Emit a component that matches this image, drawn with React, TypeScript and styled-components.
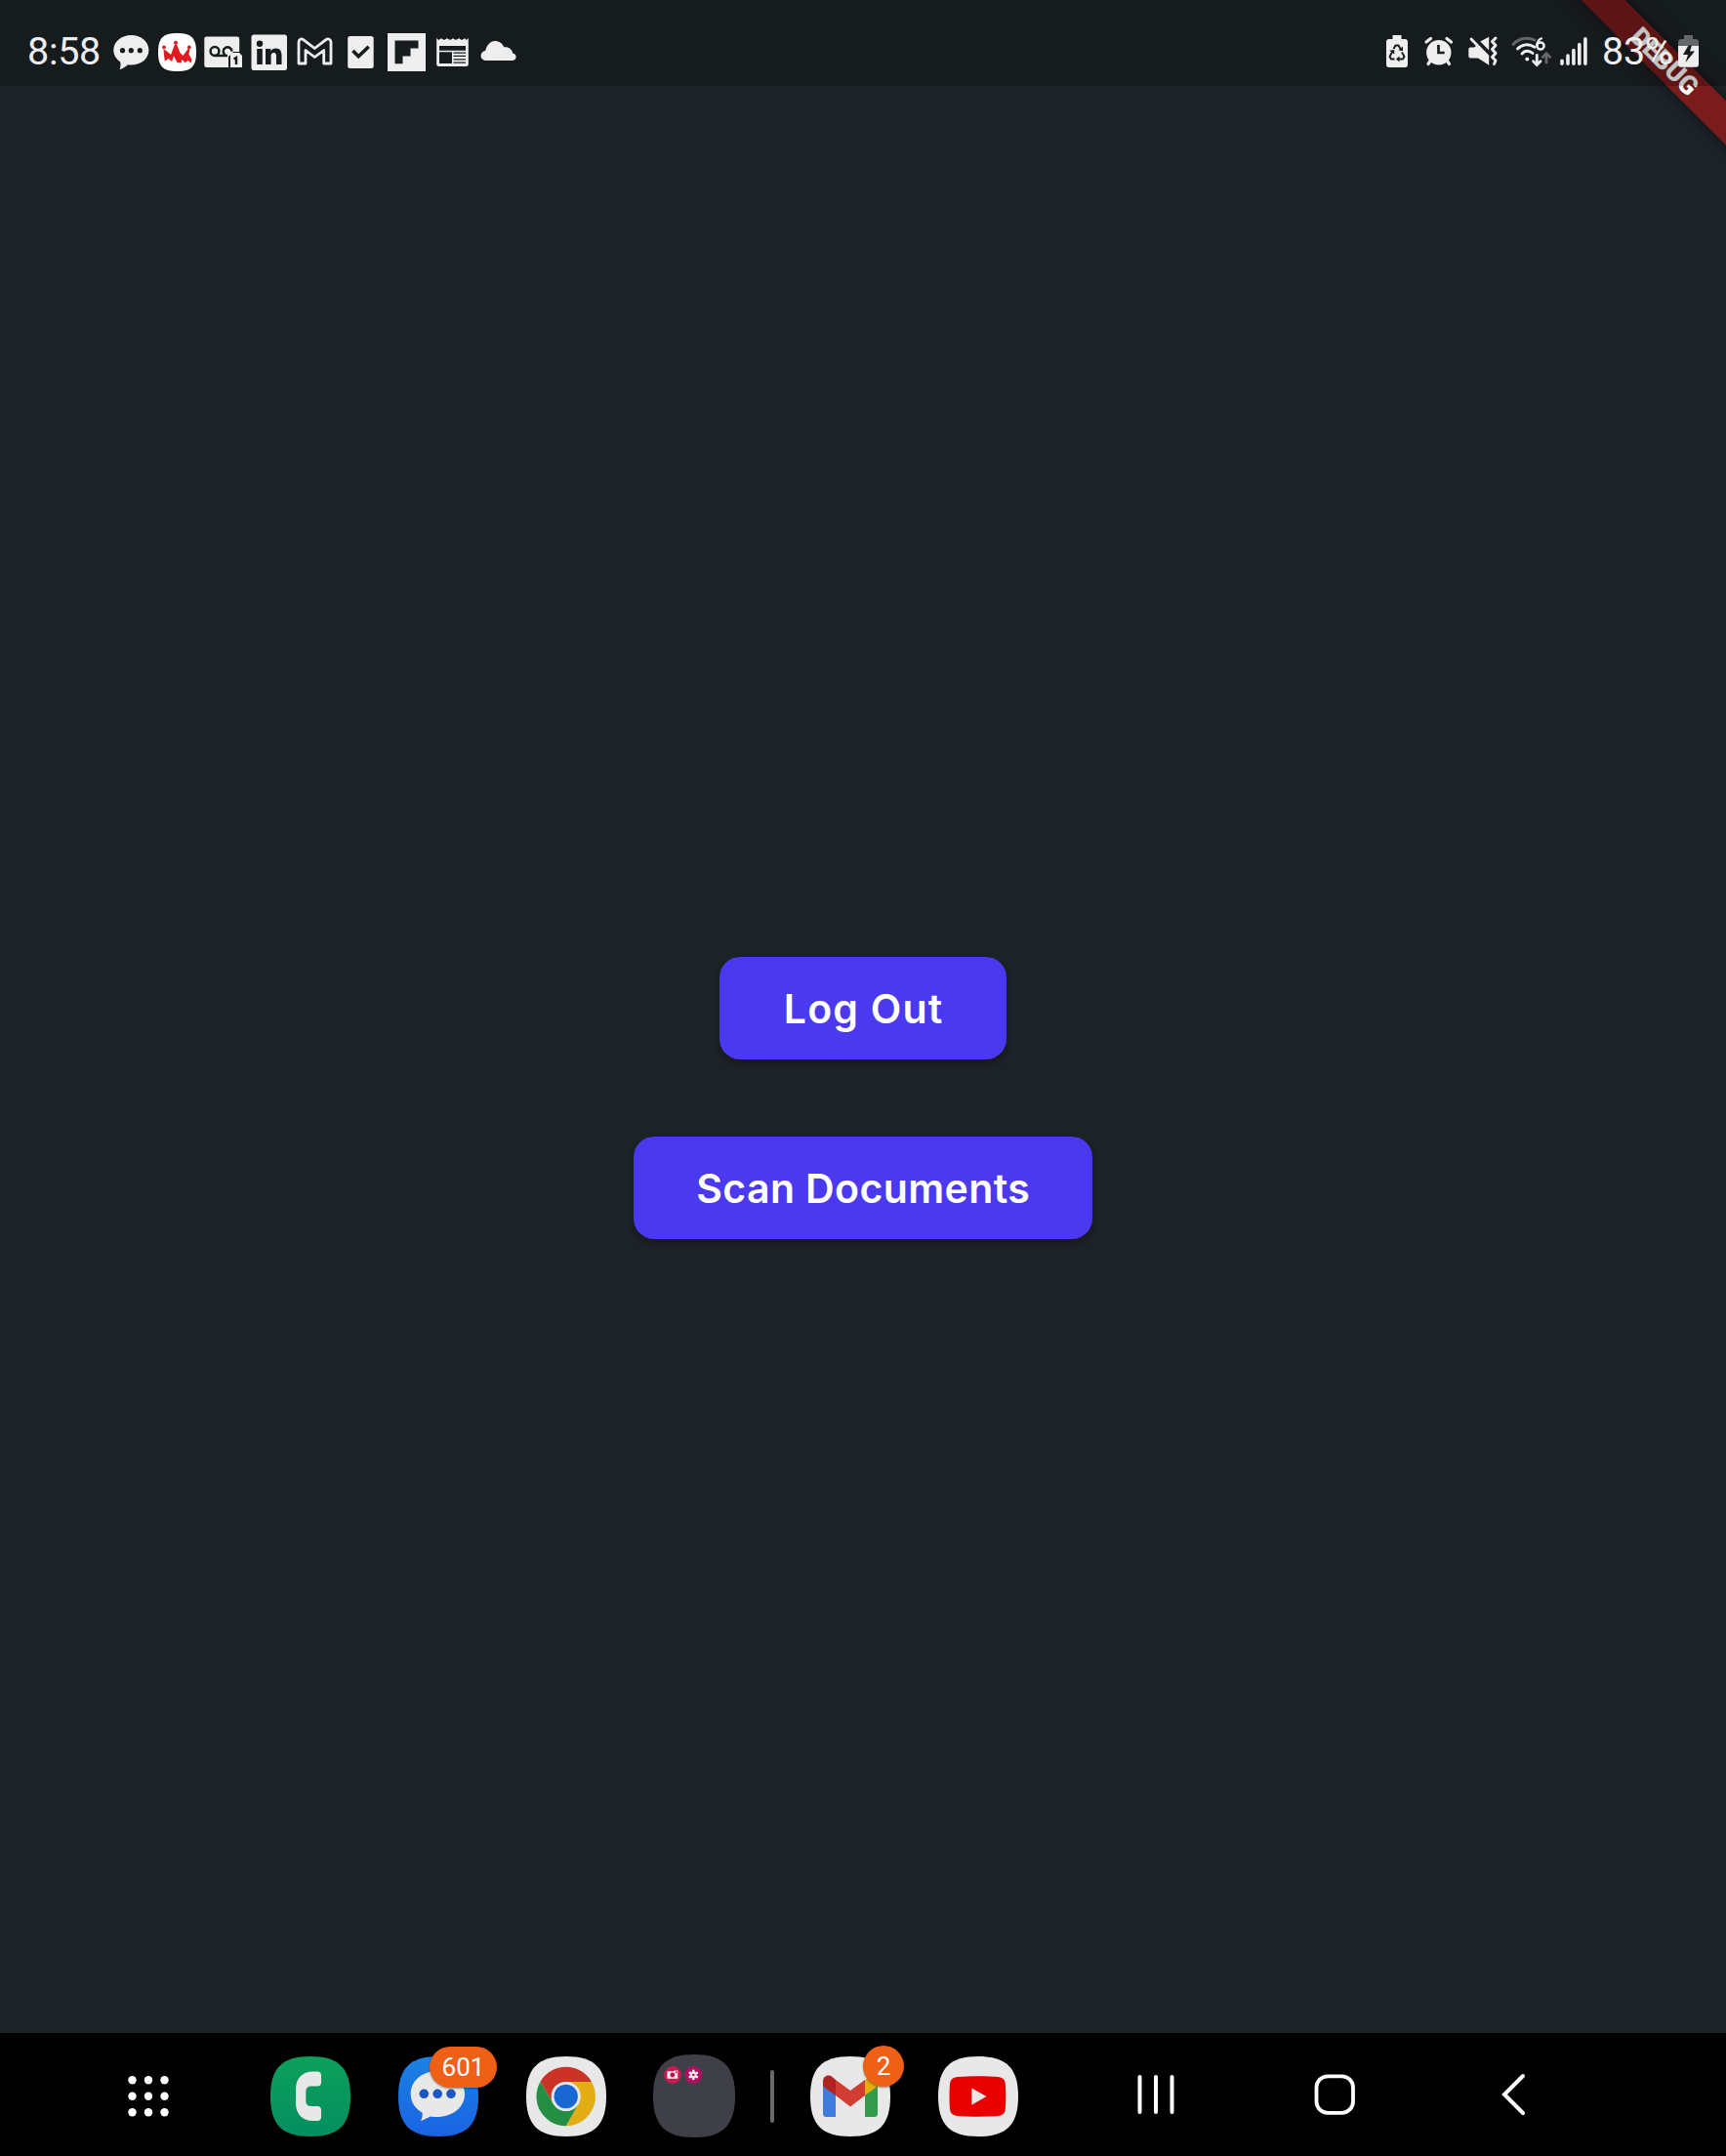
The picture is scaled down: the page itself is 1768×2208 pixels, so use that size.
import React from "react";
import styled, { createGlobalStyle } from "styled-components";

const GlobalStyle = createGlobalStyle`
  body { margin: 0; background: #1d2428; }
  *, *::before, *::after { box-sizing: border-box; }
`;

const Screen = styled.div`
  position: relative;
  display: flex;
  flex-direction: column;
  width: 1768px;
  height: 2208px;
  overflow: hidden;
  background: #1d2428;
  font-family: Roboto, "Liberation Sans", sans-serif;
`;

const StatusBar = styled.header`
  position: relative;
  z-index: 1;
  display: flex;
  justify-content: space-between;
  height: 88px;
  padding: 34px 26px 0 28px;
  background: rgba(0, 0, 0, 0.24);
  color: #eeeeee;
`;

const StatusText = styled.span<{ $width: number; $before?: number }>`
  width: ${(p) => p.$width}px;
  margin-left: ${(p) => p.$before ?? 0}px;
  font-size: 39.5px;
  line-height: 38px;
  white-space: nowrap;
  letter-spacing: -0.3px;
`;

const Notifications = styled.div`
  display: flex;
  gap: 7px;
`;

const Indicators = styled.div`
  display: flex;
`;

const Icon = styled.svg<{ $before?: number }>`
  display: block;
  flex: none;
  margin-left: ${(p) => p.$before ?? 0}px;
`;

const Ribbon = styled.div`
  position: absolute;
  left: 1495px;
  top: 47px;
  width: 420px;
  height: 32px;
  transform: rotate(45deg);
  background: #7a1b1c;
  box-shadow: 0 0 16px rgba(0, 0, 0, 0.5);
  color: #fff;
  font-size: 26.8px;
  font-weight: 900;
  line-height: 32px;
  letter-spacing: -0.1px;
  text-align: center;
`;

const Content = styled.main`
  flex: 1;
  display: flex;
  flex-direction: column;
  align-items: center;
  justify-content: center;
  gap: 79px;
  padding-top: 79px;
`;

const ActionButton = styled.button<{ $width: number; $spacing: number }>`
  width: ${(p) => p.$width}px;
  height: 105px;
  padding: 0 0 0 ${(p) => p.$spacing}px;
  border: 0;
  border-radius: 21px;
  background: #4b39ef;
  color: #fff;
  font-family: Inter, "Liberation Sans", sans-serif;
  font-size: 41px;
  font-weight: 600;
  letter-spacing: ${(p) => p.$spacing}px;
  white-space: nowrap;
  box-shadow: 0 5px 8px rgba(24, 14, 24, 0.42), 0 2px 5px rgba(24, 14, 24, 0.3);
`;

const Dock = styled.footer`
  display: flex;
  align-items: center;
  height: 126px;
  padding: 3px 0 0 111px;
  background: #000;
`;

const AppRow = styled.div<{ $before: number }>`
  display: flex;
  align-items: center;
  gap: 49px;
  margin-left: ${(p) => p.$before}px;
`;

const AppTile = styled.div`
  position: relative;
  width: 82px;
  height: 82px;
`;

const FolderTile = styled(AppTile)`
  display: flex;
  align-items: center;
  justify-content: center;
`;

const Badge = styled.span<{ $left: number; $top: number; $width: number }>`
  position: absolute;
  left: ${(p) => p.$left}px;
  top: ${(p) => p.$top}px;
  width: ${(p) => p.$width}px;
  height: 42px;
  border-radius: 21px;
  background: #ef6017;
  box-shadow: 0 1px 2px rgba(0, 0, 0, 0.4);
  color: #fff;
  font-size: 26px;
  line-height: 42px;
  text-align: center;
`;

const Divider = styled.div`
  width: 4px;
  height: 54px;
  margin-left: 37px;
  border-radius: 2px;
  background: #6a6a6a;
`;

const NavRow = styled.nav`
  display: flex;
  gap: 123px;
  margin: -3px 0 0 111px;
`;

const SQUIRCLE =
  "M41 0C70 0 82 12 82 41C82 70 70 82 41 82C12 82 0 70 0 41C0 12 12 0 41 0Z";
const INK = "#171c1e";
const PAPER = "#eeeeee";

const ChatIcon = () => (
  <Icon width="40" height="40" viewBox="0 0 40 40">
    <path
      fill={PAPER}
      d="M20.500 2C10.300 2 2.300 8.700 2.300 17.300C2.300 22.400 5 26.500 9.300 29.400C9.700 32 9.500 34.500 8.600 37.200C12.300 36.200 14.800 34.300 17 32.300C29 33.900 38.400 27 38.400 17.300C38.400 8.700 30.700 2 20.500 2Z"
    />
    <g fill={INK}>
      <circle cx="11.500" cy="17.700" r="2.600" />
      <circle cx="20.300" cy="17.700" r="2.600" />
      <circle cx="29.300" cy="17.700" r="2.600" />
    </g>
  </Icon>
);

const CrownIcon = () => (
  <Icon width="40" height="40" viewBox="0 0 40 40">
    <path
      fill="#fff"
      d="M20.500 0C35 0 40 5 40 19.500C40 34 35 39 20.500 39C6 39 1 34 1 19.500C1 5 6 0 20.500 0Z"
    />
    <g fill="#e11b22">
      <circle cx="7" cy="14.300" r="1.900" />
      <circle cx="19" cy="9.800" r="2" />
      <circle cx="32.800" cy="14.300" r="1.900" />
      <path d="M6.500 16L12.500 20.500L14 22L18 11.500H20L23.500 20L26.500 23L32 15.500L33.500 16L32.500 21.500L35.500 27L34.500 30.500L31.500 28L28.500 30.200L25.500 27L24.500 30.500L20.500 30L17 23.500L15 29L11.500 26L8 28.800L7 23Z" />
    </g>
  </Icon>
);

const VoicemailIcon = () => (
  <Icon width="40" height="40" viewBox="0 0 40 40">
    <path
      fill={PAPER}
      d="M3.500 3.500H35A2.200 2.200 0 0 1 37.200 5.700V19H31L26 24V35H3.500A2.200 2.200 0 0 1 1.300 32.800V5.700A2.200 2.200 0 0 1 3.500 3.500Z"
    />
    <g fill="none" stroke={INK} strokeWidth="2.500">
      <circle cx="12" cy="18.500" r="4.400" />
      <path d="M22.600 22.300A4.400 4.400 0 1 1 29.500 18.500" />
      <path d="M12 23H25" />
    </g>
    <path fill={PAPER} d="M30.500 20H37L40 23V35H28V22.500A2.500 2.500 0 0 1 30.500 20Z" />
    <path d="M31.500 26.500L34 25V32" fill="none" stroke={INK} strokeWidth="2.400" />
  </Icon>
);

const LinkedInIcon = () => (
  <Icon width="40" height="40" viewBox="0 0 40 40">
    <rect x="2.500" y="1.500" width="36.500" height="36.500" rx="2.500" fill={PAPER} />
    <g fill={INK}>
      <circle cx="11" cy="10.700" r="3.200" />
      <path d="M8.200 16H13.800V32H8.200Z" />
      <path d="M17 16H22.300V18.300C23.400 16.500 25.300 15.500 27.500 15.500C32 15.500 33.500 18.500 33.500 23V32H28V24C28 21.500 27.400 20 25.500 20C23.300 20 22.600 21.500 22.600 24V32H17Z" />
    </g>
  </Icon>
);

const MailIcon = () => (
  <Icon width="40" height="40" viewBox="0 0 40 40">
    <path
      d="M4 31V9.300C4 6.200 6.500 5 9 6.800L20.300 15.500L31.600 6.800C34.200 5 37 6.200 37 9.300V31H29.700V17.500L20.300 24.500L11 17.500V31Z"
      fill="none"
      stroke={PAPER}
      strokeWidth="2.800"
      strokeLinejoin="round"
    />
  </Icon>
);

const CheckIcon = () => (
  <Icon width="40" height="40" viewBox="0 0 40 40">
    <rect x="7.200" y="3" width="26.500" height="33" rx="2.500" fill={PAPER} />
    <path d="M12.500 18L18.200 23.700L28.700 13.800" fill="none" stroke={INK} strokeWidth="3.600" />
  </Icon>
);

const FlipboardIcon = () => (
  <Icon width="40" height="40" viewBox="0 0 40 40">
    <rect x="1" width="39" height="39" fill={PAPER} />
    <path d="M8.500 7.500H32.500V15.500H24.500V23.500H16.500V31.300H8.500Z" fill={INK} />
  </Icon>
);

const NewsIcon = () => (
  <Icon width="40" height="40" viewBox="0 0 40 40">
    <path
      fill={PAPER}
      d="M4.200 5L6.200 7L9 5.200L12 7L15 5.200L18 7L21 5.200L24 7L27 5.200L30 7L33 5.200L34.800 7L36.800 5V31.500A2.500 2.500 0 0 1 34.300 34H6.700A2.500 2.500 0 0 1 4.200 31.500Z"
    />
    <path
      fill={INK}
      d="M7 13H34V17.700H7ZM7 19.300H20V31H7ZM21.500 19.500H34V20.700H21.500ZM21.500 22.800H34V24H21.500ZM21.500 26.200H34V27.400H21.500ZM21.500 29.600H34V30.800H21.500Z"
    />
  </Icon>
);

const CloudIcon = () => (
  <Icon width="40" height="40" viewBox="0 0 40 40">
    <path
      fill={PAPER}
      d="M8 28A5 5 0 0 1 7.200 18C8.500 12.500 12 8 17 8C21.800 8 24.700 10.700 26.400 14.200C31.500 13.800 34.500 16.500 35.200 20.500C40.200 21.500 39.500 28 34.500 28Z"
    />
  </Icon>
);

const RecycleBatteryIcon = () => (
  <Icon width="24" height="40" viewBox="0 0 24 40">
    <path
      fill={PAPER}
      d="M7.500 2H16.500V6H20A3 3 0 0 1 23 9V32A3 3 0 0 1 20 35H4A3 3 0 0 1 1 32V9A3 3 0 0 1 4 6H7.500Z"
    />
    <g fill="none" stroke={INK} strokeWidth="1.900" strokeLinejoin="round">
      <path d="M8.500 16L10.500 12.500H13.500L16 17" />
      <path d="M7.500 18.500L4.500 24L6 26.500H9.500" />
      <path d="M17 19.500L19.500 24L18 26.500H13" />
    </g>
    <path fill={INK} d="M13.500 17.500L18 18V13.500ZM4.200 17.800L9 17L9.500 21.500ZM14.500 23.500V29.500L11 26.500Z" />
  </Icon>
);

const AlarmIcon = () => (
  <Icon $before={14} width="32" height="40" viewBox="0 0 32 40">
    <g stroke={PAPER} strokeWidth="3.200" strokeLinecap="round">
      <path d="M4 9L8.500 5.500M29.500 9L25 5.500M9 27L6 31.500M24.500 27L27.500 31.500" />
    </g>
    <circle cx="16.800" cy="19.800" r="12.700" fill={PAPER} />
    <path d="M16.500 12V20H22.700" fill="none" stroke={INK} strokeWidth="2.700" />
  </Icon>
);

const MuteIcon = () => (
  <Icon $before={13} width="34" height="40" viewBox="0 0 34 40">
    <path
      fill={PAPER}
      d="M2.300 16.500A2 2 0 0 1 4.300 14.500H8L11.500 12L23.200 24.500V32.800L12 25.500H4.300A2 2 0 0 1 2.300 23.500ZM14.300 8.500L23.200 3.800V17.500Z"
    />
    <path d="M5 6L22 23.500" stroke={PAPER} strokeWidth="2.800" strokeLinecap="round" />
    <path
      d="M30 5L26.500 8.500L30 12.500L26.500 16.500L30 20.500L26.500 24.500L30 28L28.500 31.500"
      fill="none"
      stroke={PAPER}
      strokeWidth="3"
      strokeLinecap="round"
      strokeLinejoin="round"
    />
  </Icon>
);

const WifiIcon = () => (
  <Icon $before={11} width="42" height="40" viewBox="0 0 42 40">
    <g fill="none" strokeWidth="2.900" strokeLinecap="round">
      <path d="M3 11.500C9 4.800 18 3.700 25 7" stroke="#62666a" />
      <path d="M7.500 16C12 11 19 10.500 25 14.200M12 21C15 17.500 19.500 17.500 23 20.500" stroke={PAPER} />
    </g>
    <circle cx="17.300" cy="26.500" r="2" fill={PAPER} />
    <circle cx="31" cy="13" r="3.600" fill="none" stroke={PAPER} strokeWidth="2.500" />
    <path d="M27.300 13C27.300 8.500 29.300 6 32.800 5" fill="none" stroke={PAPER} strokeWidth="2.300" />
    <path
      d="M27.300 22.500V32M23.600 28.800L27.300 32.500L31 28.800"
      fill="none"
      stroke={PAPER}
      strokeWidth="2.800"
      strokeLinecap="round"
    />
    <path
      d="M37 30V21.500M33.300 24.500L37 20.800L40.700 24.500"
      fill="none"
      stroke="#62666a"
      strokeWidth="2.800"
      strokeLinecap="round"
    />
  </Icon>
);

const SignalIcon = () => (
  <Icon $before={8} width="30" height="40" viewBox="0 0 30 40">
    <g stroke={PAPER} strokeWidth="3.600" strokeLinecap="round">
      <path d="M3 28.300V31.300M9 23V31.300M14.900 17.500V31.300M20.800 11.500V31.300M26.900 5.800V31.300" />
    </g>
  </Icon>
);

const ChargingIcon = () => (
  <Icon $before={10} width="24" height="40" viewBox="0 0 24 40">
    <path fill="#65686b" d="M7 2H16V6H19.500A3 3 0 0 1 22 9V13H1V9A3 3 0 0 1 3.500 6H7Z" />
    <path fill={PAPER} d="M1 13H22V32A2.700 2.700 0 0 1 19.300 34.700H3.700A2.700 2.700 0 0 1 1 32Z" />
    <path fill={INK} d="M11.500 12.500H15L13 18.500H18L8.500 30L11 22H6Z" />
  </Icon>
);

const AppsIcon = () => (
  <Icon width="82" height="82" viewBox="0 0 82 82">
    {[24.2, 40.7, 57.2].map((y) =>
      [24.5, 41, 57.5].map((x) => (
        <circle key={`${x}-${y}`} cx={x} cy={y} r="4.200" fill="#fff" />
      ))
    )}
  </Icon>
);

const PhoneIcon = () => (
  <Icon width="82" height="82" viewBox="0 0 82 82">
    <defs>
      <linearGradient id="phone" x2="0" y2="1">
        <stop stopColor="#0ba05a" />
        <stop offset="1" stopColor="#058e60" />
      </linearGradient>
    </defs>
    <path d={SQUIRCLE} fill="url(#phone)" />
    <path
      fill="#e8e8e8"
      d="M44 15.500H48Q52 15.500 52 19.500V26.500Q52 30.500 48 30.500H42Q36.300 30.500 36.300 36V45.500Q36.300 51 42 51H48Q52 51 52 55V62Q52 66 48 66H44C32 66 26 58.500 26 48V33.500C26 23 32 15.500 44 15.500Z"
    />
  </Icon>
);

const MessagesIcon = () => (
  <Icon width="82" height="82" viewBox="0 0 82 82">
    <defs>
      <linearGradient id="messages" x2="0" y2="1">
        <stop stopColor="#1b82e2" />
        <stop offset="1" stopColor="#1a63e4" />
      </linearGradient>
    </defs>
    <path d={SQUIRCLE} fill="url(#messages)" />
    <path
      fill="#e8e8e8"
      d="M40.300 15C25 15 12.700 24.500 12.700 38.500C12.700 47 17.500 53.500 24.500 57.500C25 60.500 24.500 63 23 66.300L33 61.500C52 64.500 68 54 68 38.500C68 24.500 56 15 40.300 15Z"
    />
    <g fill="#1c56c4">
      <circle cx="26.300" cy="38.300" r="4.800" />
      <circle cx="40.200" cy="38.300" r="4.800" />
      <circle cx="54" cy="38.300" r="4.800" />
    </g>
  </Icon>
);

const ChromeIcon = () => (
  <Icon width="82" height="82" viewBox="0 0 82 82">
    <path d={SQUIRCLE} fill="#e8e8e8" />
    <g transform="translate(40.700 41)">
      <path fill="#cb3327" d="M-26.200 -15.100A30.200 30.200 0 0 1 26.200 -15.100H0L-13 7.500Z" />
      <path fill="#e3ae14" d="M26.200 -15.100A30.200 30.200 0 0 1 0 30.200L13 7.500L0 -15.100Z" />
      <path fill="#248e42" d="M0 30.200A30.200 30.200 0 0 1 -26.200 -15.100L-13 7.500H13Z" />
      <circle r="15.100" fill="#e8e8e8" />
      <circle r="12.200" fill="#1967d2" />
    </g>
  </Icon>
);

const FolderIcon = () => (
  <Icon width="84" height="85" viewBox="-1 -1 84 84" preserveAspectRatio="none">
    <path
      d="M41 -1C70 -1 83 11 83 41C83 71 70 83 41 83C12 83 -1 71 -1 41C-1 11 12 -1 41 -1Z"
      fill="#3f3f47"
    />
    <circle cx="19" cy="19.700" r="8.800" fill="#c91a51" />
    <path fill="#eee" d="M13.500 16H19.500L21 15.300H24.300V23.500H13.500Z" />
    <circle cx="18.800" cy="19.700" r="2.400" fill="#b3174b" />
    <circle cx="22.700" cy="17" r="0.900" fill="#b3174b" />
    <circle cx="40.300" cy="19.700" r="8.800" fill="#b30c64" />
    <g stroke="#eee" strokeWidth="2.700" strokeLinecap="round">
      <path d="M40.300 15.700V23.700M36.800 17.700L43.800 21.700M36.800 21.700L43.800 17.700" />
    </g>
    <circle cx="40.300" cy="19.700" r="1.300" fill="#b30c64" />
  </Icon>
);

const GmailAppIcon = () => (
  <Icon width="82" height="82" viewBox="0 0 82 82">
    <path d={SQUIRCLE} fill="#e8e8e8" />
    <path fill="#3f7bdc" d="M13 29L26 39V62H16.500A3.500 3.500 0 0 1 13 58.500Z" />
    <path fill="#319b4b" d="M69 29L56 39V62H65.500A3.500 3.500 0 0 0 69 58.500Z" />
    <path fill="#e3ae0c" d="M56 24.500L60.500 21C64.500 18 69 20.500 69 25V30.500L56 40Z" />
    <path fill="#d23d33" d="M26 24L41 35L56 24V40L41 51.500L26 40Z" />
    <path fill="#b02320" d="M13 25.500C13 20 18.500 17.800 22.500 21L26 24V40L13 30.500Z" />
  </Icon>
);

const YoutubeIcon = () => (
  <Icon width="82" height="82" viewBox="0 0 82 82">
    <path d={SQUIRCLE} fill="#e8e8e8" />
    <path
      fill="#e80000"
      d="M20 21C33 20 48 20 61 21C66 21.500 68.300 23.500 68.800 28C69.500 37 69.500 45 68.800 54C68.300 58.500 66 60.500 61 61C48 62 33 62 20 61C15 60.500 12.600 58.500 12 54C11.300 45 11.300 37 12 28C12.600 23.500 15 21.500 20 21Z"
    />
    <path fill="#e8e8e8" d="M34.300 32.500L49.500 41L34.300 49.700Z" />
  </Icon>
);

const RecentsIcon = () => (
  <Icon width="60" height="60" viewBox="0 0 60 60">
    <path d="M13.500 12V48M30 12V48M46.500 12V48" stroke="#fff" strokeWidth="4" strokeLinecap="round" />
  </Icon>
);

const HomeIcon = () => (
  <Icon width="60" height="60" viewBox="0 0 60 60">
    <rect
      x="11.500"
      y="11.300"
      width="37.500"
      height="37.500"
      rx="11.500"
      fill="none"
      stroke="#fff"
      strokeWidth="3.800"
    />
  </Icon>
);

const BackIcon = () => (
  <Icon width="60" height="60" viewBox="0 0 60 60">
    <path d="M40 11L21 30L40 49" fill="none" stroke="#fff" strokeWidth="4" strokeLinecap="round" />
  </Icon>
);

export default function App() {
  return (
    <Screen>
      <GlobalStyle />
      <Ribbon>DEBUG</Ribbon>
      <StatusBar>
        <Notifications>
          <StatusText $width={79}>8:58</StatusText>
          <ChatIcon />
          <CrownIcon />
          <VoicemailIcon />
          <LinkedInIcon />
          <MailIcon />
          <CheckIcon />
          <FlipboardIcon />
          <NewsIcon />
          <CloudIcon />
        </Notifications>
        <Indicators>
          <RecycleBatteryIcon />
          <AlarmIcon />
          <MuteIcon />
          <WifiIcon />
          <SignalIcon />
          <StatusText $width={67} $before={14}>83%</StatusText>
          <ChargingIcon />
        </Indicators>
      </StatusBar>
      <Content>
        <ActionButton $width={294} $spacing={1.2}>Log Out</ActionButton>
        <ActionButton $width={470} $spacing={0.4}>Scan Documents</ActionButton>
      </Content>
      <Dock>
        <AppsIcon />
        <AppRow $before={84}>
          <AppTile><PhoneIcon /></AppTile>
          <AppTile>
            <MessagesIcon />
            <Badge $left={32} $top={-10} $width={69}>601</Badge>
          </AppTile>
          <AppTile><ChromeIcon /></AppTile>
          <FolderTile><FolderIcon /></FolderTile>
        </AppRow>
        <Divider />
        <AppRow $before={37}>
          <AppTile>
            <GmailAppIcon />
            <Badge $left={54} $top={-11} $width={42}>2</Badge>
          </AppTile>
          <AppTile><YoutubeIcon /></AppTile>
        </AppRow>
        <NavRow>
          <RecentsIcon />
          <HomeIcon />
          <BackIcon />
        </NavRow>
      </Dock>
    </Screen>
  );
}
